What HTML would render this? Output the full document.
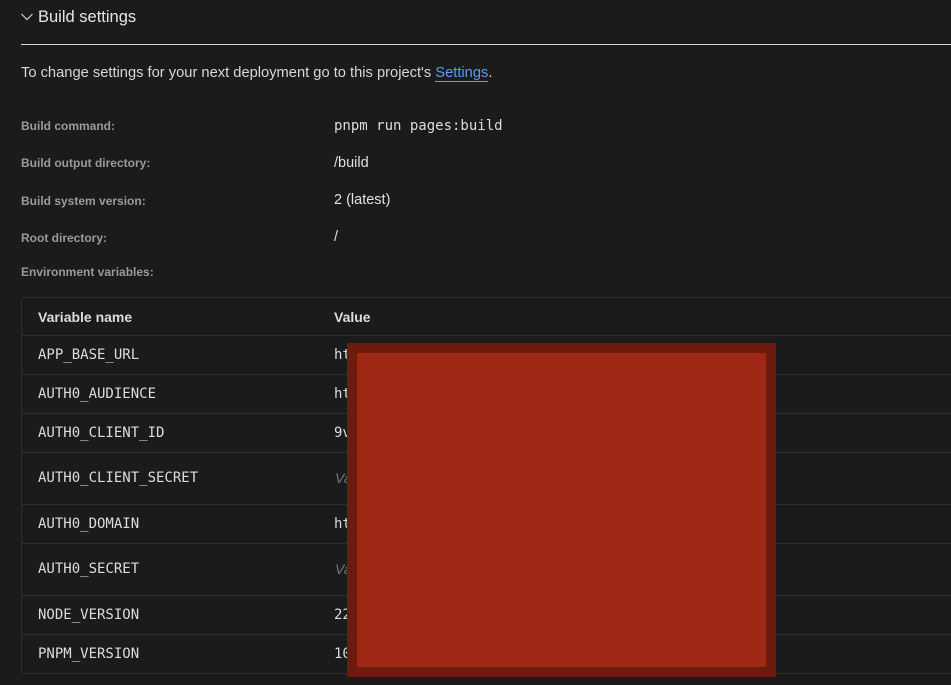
<!DOCTYPE html>
<html><head><style>
*{margin:0;padding:0;box-sizing:border-box}
body{width:951px;height:685px;background:#1b1b1b;color:#e6e6e6;font-family:"Liberation Sans",sans-serif;position:relative;overflow:hidden}
.a{position:absolute;white-space:nowrap}
.lbl{font-size:12px;font-weight:bold;color:#9a9a9a;left:21px}
.val{font-size:14.5px;color:#e0e0e0;left:334px}
.mono{font-family:"DejaVu Sans Mono",monospace;font-size:14px;color:#dcdcdc}
.line{position:absolute;left:22px;right:0;height:1px;background:#2e2e2e}
</style></head><body>
<svg class="a" style="left:20px;top:11px" width="14" height="12" viewBox="0 0 14 12"><path d="M1.5 3 L7 8.5 L12.5 3" fill="none" stroke="#cfcfcf" stroke-width="1.2"/></svg>
<div class="a" style="left:38px;top:8px;font-size:16.5px;color:#e6e6e6">Build settings</div>
<div class="a" style="left:21px;top:44px;width:930px;height:1px;background:#d6d6d6"></div>
<div class="a" style="left:21px;top:65px;font-size:14.7px;color:#d8d8d8">To change settings for your next deployment go to this project's <span style="color:#5b9cf5;border-bottom:1px solid #5b9cf5">Settings</span>.</div>
<div class="a lbl" style="top:119px">Build command:</div>
<div class="a mono" style="left:334px;top:118px">pnpm run pages:build</div>
<div class="a lbl" style="top:156px">Build output directory:</div>
<div class="a val" style="top:155px">/build</div>
<div class="a lbl" style="top:194px">Build system version:</div>
<div class="a val" style="top:192px">2 (latest)</div>
<div class="a lbl" style="top:231px">Root directory:</div>
<div class="a val" style="top:229px">/</div>
<div class="a lbl" style="top:265px">Environment variables:</div>
<div class="a" style="left:21px;top:297px;width:940px;height:377px;border:1px solid #2e2e2e;border-radius:4px"></div>
<div class="a" style="left:38px;top:309px;font-size:14px;font-weight:bold;color:#dcdcdc">Variable name</div>
<div class="a" style="left:334px;top:309px;font-size:14px;font-weight:bold;color:#dcdcdc">Value</div>
<div class="line" style="top:335px"></div>
<div class="line" style="top:374px"></div>
<div class="line" style="top:413px"></div>
<div class="line" style="top:452px"></div>
<div class="line" style="top:504px"></div>
<div class="line" style="top:543px"></div>
<div class="line" style="top:595px"></div>
<div class="line" style="top:634px"></div>
<div class="a mono" style="left:38px;top:347px">APP_BASE_URL</div><div class="a mono" style="left:334px;top:347px">ht</div>
<div class="a mono" style="left:38px;top:386px">AUTH0_AUDIENCE</div><div class="a mono" style="left:334px;top:386px">ht</div>
<div class="a mono" style="left:38px;top:425px">AUTH0_CLIENT_ID</div><div class="a mono" style="left:334px;top:425px">9v</div>
<div class="a mono" style="left:38px;top:470px">AUTH0_CLIENT_SECRET</div><div class="a" style="left:335px;top:470px;font-size:14px;font-style:italic;color:#777">Va</div>
<div class="a mono" style="left:38px;top:516px">AUTH0_DOMAIN</div><div class="a mono" style="left:334px;top:516px">ht</div>
<div class="a mono" style="left:38px;top:561px">AUTH0_SECRET</div><div class="a" style="left:335px;top:561px;font-size:14px;font-style:italic;color:#777">Va</div>
<div class="a mono" style="left:38px;top:607px">NODE_VERSION</div><div class="a mono" style="left:334px;top:607px">22</div>
<div class="a mono" style="left:38px;top:646px">PNPM_VERSION</div><div class="a mono" style="left:334px;top:646px">10</div>
<div class="a" style="left:347px;top:343px;width:429px;height:334px;background:#6d1b0f"></div>
<div class="a" style="left:357px;top:353px;width:409px;height:314px;background:#9e2814"></div>
</body></html>
